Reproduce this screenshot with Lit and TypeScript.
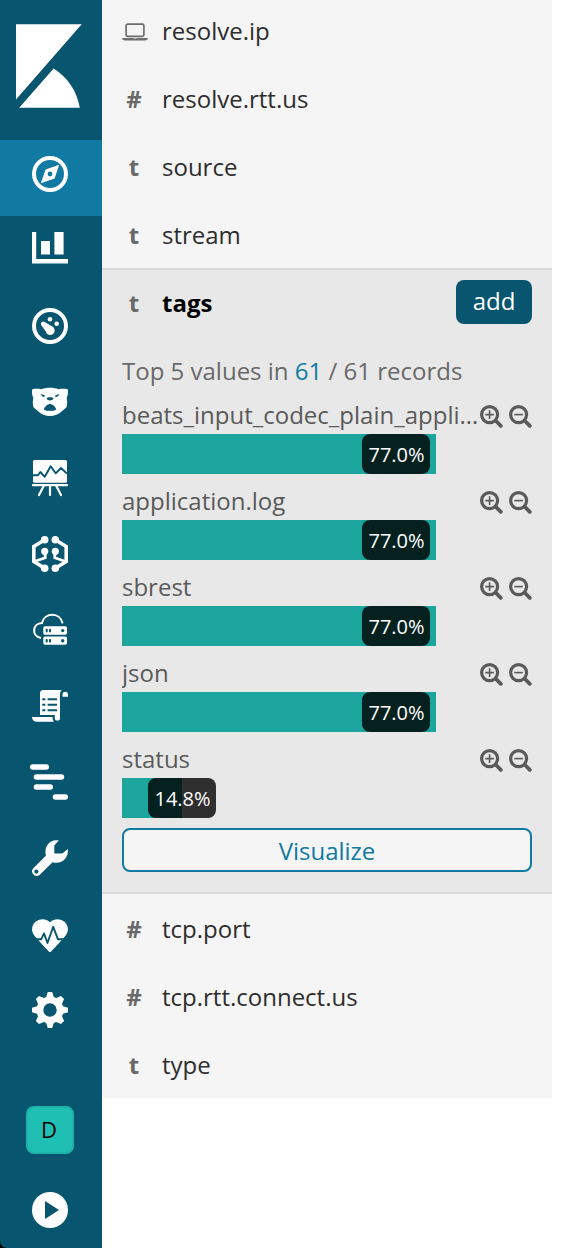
import { LitElement, html, svg, css } from "lit";
import { customElement, property } from "lit/decorators.js";

const icons: Record<string, unknown> = {
  discover: svg`
    <circle cx="18" cy="18" r="16" fill="none" stroke="#fff" stroke-width="4"/>
    <path fill-rule="evenodd" d="M27.2 8.8 22.6 22.4 8.8 27.2 13.6 13.4ZM18 15.6a2.4 2.4 0 1 0 0 4.8 2.4 2.4 0 0 0 0-4.8Z"/>`,
  visualize: svg`<path d="M0 0H4.2V27H36V31.5H0ZM9 9H18V22.6H9ZM22.4 0H31.6V22.6H22.4Z"/>`,
  dashboard: svg`
    <circle cx="18" cy="18" r="16" fill="none" stroke="#fff" stroke-width="4"/>
    <circle cx="18" cy="11.3" r="2.3"/><circle cx="24.7" cy="15.7" r="2.3"/>
    <path d="M12.7 14 20.8 18.8A4.5 4.5 0 1 1 13.8 23.5L9.3 17.3A2.4 2.4 0 0 1 12.7 14Z"/>`,
  timelion: svg`
    <path d="M.3 5.2C3 4.6 6.5 4.6 9.5 5.2 14 3.2 22 3.2 26.5 5.2 29.5 4.6 33 4.6 35.7 5.2 36.3 8 36 11.5 34.6 14 35.5 17 35.5 21 34.2 23.8 30.5 26 27 32 18 32 9 32 5.5 26 1.8 23.8.5 21 .5 17 1.4 14 0 11.5-.3 8 .3 5.2Z"/>
    <g class="cut"><path d="M8.8 10 13 11.6 12.4 12.9 9.8 12.3ZM27.2 10 23 11.6 23.6 12.9 26.2 12.3Z"/>
    <path d="M14.5 14.5C15 12.8 21 12.8 21.5 14.5 20.5 17 15.5 17 14.5 14.5Z"/>
    <path d="M18 20C21 20 24 23.5 24 25.5 24 27.3 12 27.3 12 25.5 12 23.5 15 20 18 20Z"/></g>`,
  canvas: svg`
    <rect x="1" y="0" width="34" height="22.7" rx="1.5"/>
    <rect x="0" y="24" width="36" height="2.2" rx=".6"/>
    <path d="M11.7 26 7 35M18 26V35M24.3 26 29 35" fill="none" stroke="#fff" stroke-width="2.2" stroke-linecap="round"/>
    <path class="pulse" d="M1 15.2H6L8.3 12 12.7 16.8 18.7 6.3 23.7 13.3 29 8 35 13.6"/>`,
  ml: svg`
    <g fill="none" stroke="#fff" stroke-width="3.6"><path d="M12.7 3.7 1.8 10.5V25.5L12.7 32.3M23.3 3.7 34.2 10.5V25.5L23.3 32.3"/>
    <path stroke-width="2.8" d="M13.2 16V21.8L3 25.3M22.8 16V21.8L33 25.3"/></g>
    <circle cx="12.7" cy="3.8" r="3.8"/><circle cx="23.3" cy="3.8" r="3.8"/>
    <circle cx="12.7" cy="32.2" r="3.8"/><circle cx="23.3" cy="32.2" r="3.8"/>
    <circle cx="12.7" cy="15.3" r="3.6"/><circle cx="23.3" cy="15.3" r="3.6"/>`,
  infra: svg`
    <path d="M9 26C-.8 24.2.2 11.2 10 11 12.5-.2 28.5 0 30.6 11.4" fill="none" stroke="#fff" stroke-width="2.1"/>
    <rect x="11.3" y="14.3" width="23.7" height="8.4" rx="1.7"/><rect x="11.3" y="24.6" width="23.7" height="8.2" rx="1.7"/>
    <g class="cut"><rect x="13.7" y="16.8" width="2" height="3.6" rx=".8"/><rect x="17" y="16.8" width="2" height="3.6" rx=".8"/><circle cx="30.7" cy="18.6" r="1.7"/>
    <rect x="13.7" y="26.9" width="2" height="3.6" rx=".8"/><rect x="17" y="26.9" width="2" height="3.6" rx=".8"/><circle cx="30.7" cy="28.7" r="1.7"/></g>`,
  logs: svg`
    <path d="M10.5 2H30C28.6 3 28 4.5 28 6.5V30A2.6 2.6 0 0 1 22.8 30V27H8V5Q8 2.4 10.5 2Z"/>
    <path d="M30.5 8.7V6A2.8 2.8 0 0 1 36 6V8.7Z"/>
    <path d="M0 29H20.5C20.5 31 21 32.8 22 33.7H4.5C1.5 33.7 0 31.5 0 29Z"/>
    <path class="cut" d="M10.3 10.3H13.4V12.3H10.3ZM15.6 10.3H25V12.3H15.6ZM10.3 15.8H13.4V17.8H10.3ZM15.6 15.8H25V17.8H15.6ZM10.3 21.3H13.4V23.3H10.3ZM15.6 21.3H25V23.3H15.6Z"/>`,
  apm: svg`
    <rect x="-2" y=".2" width="19" height="5.6" rx="2.8"/><rect x="1.7" y="10.2" width="30.5" height="5.6" rx="2.8"/>
    <rect x="1.7" y="20.2" width="19.3" height="5.6" rx="2.8"/><rect x="20.7" y="30.2" width="15.3" height="5.6" rx="2.8"/>`,
  tools: svg`
    <path fill-rule="evenodd" d="M26.7.4 22.3 5.5V13.4H30.3L35.8 9C37 18 29.5 24.7 20.6 22.2L7.5 35A4.6 4.6 0 0 1 1.1 28.5L14 15.6C11.5 7 17.5-1.2 26.7.4ZM4.4 29.5a2.1 2.1 0 1 0 0 4.2 2.1 2.1 0 0 0 0-4.2Z"/>`,
  heart: svg`
    <path d="M18 6.2C22 2 29 2.3 32.8 6 36.5 9.7 37 15.3 33.7 19.5 31 23 22.5 31.8 19.2 35.4Q18 36.6 16.8 35.4C13.5 31.8 5 23 2.3 19.5-1 15.3-.5 9.7 3.2 6 7 2.3 14 2 18 6.2Z"/>
    <path class="pulse" d="M0 23.3H9.2L12 17.4 15.5 27 21.2 10.8 26 23.3H36"/>`,
  gear: svg`
    <path fill-rule="evenodd" d="M15.8 0H20.2L21.8 5 24.2 6 29 3.9 32.1 7 30 11.8 31 14.2 36 15.8V20.2L31 21.8 30 24.2 32.1 29 29 32.1 24.2 30 21.8 31 20.2 36H15.8L14.2 31 11.8 30 7 32.1 3.9 29 6 24.2 5 21.8 0 20.2V15.8L5 14.2 6 11.8 3.9 7 7 3.9 11.8 6 14.2 5ZM18 11.3a6.7 6.7 0 1 0 0 13.4 6.7 6.7 0 0 0 0-13.4Z"/>`,
  play: svg`<circle cx="18" cy="18" r="18"/><path class="cut" d="M13 9 27 18 13 27Z"/>`,
};

const navItems = ["discover", "visualize", "dashboard", "timelion", "canvas", "ml", "infra", "logs", "apm", "tools", "heart", "gear"];

@customElement("side-nav")
class SideNav extends LitElement {
  static styles = css`
    :host { display: flex; flex-direction: column; width: 102px; height: 1248px; background: #07556e; border-bottom-left-radius: 7px; }
    .logo { height: 140px; display: block; }
    .item { box-sizing: border-box; height: 76px; padding: 16px 0 0 32px; }
    .item.active { background: #107aa3; }
    svg { display: block; overflow: visible; fill: #fff; }
    .cut { fill: #07556e; }
    .pulse { fill: none; stroke: #07556e; stroke-width: 1.9; stroke-linejoin: round; }
    .space { box-sizing: border-box; margin: 54px 0 38px 26px; width: 48px; height: 48px; border: 2px solid #1eb3a8; border-radius: 8px; background: #20bfb3; color: #000; font: 22px/43px "Open Sans", sans-serif; text-align: center; padding-right: 2px; }
    .play { padding-left: 32px; }
  `;
  render() {
    return html`
      <svg class="logo" width="102" height="140"><path d="M16 24.2H81.7L16 99.4ZM53.6 68.6 19.2 107.8H79.8C77.2 91.5 67.5 77 53.6 68.6Z"/></svg>
      ${navItems.map((n, i) => html`<div class="item ${i === 0 ? "active" : ""}"><svg width="36" height="36">${icons[n]}</svg></div>`)}
      <div class="space">D</div>
      <div class="play"><svg width="36" height="36">${icons.play}</svg></div>
    `;
  }
}

@customElement("field-row")
class FieldRow extends LitElement {
  @property() kind = "t";
  @property() name = "";
  static styles = css`
    :host { box-sizing: border-box; display: flex; align-items: center; height: 64px; padding: 0 0 2px 20px; font: 24px/36px "Open Sans", sans-serif; color: #2d2d2d; }
    .kind { width: 24px; margin-right: 16px; display: flex; justify-content: center; font-weight: 700; color: #696969; }
    .kind svg { display: block; flex: none; margin: 2px 0 0 2px; }
    :host([selected]) { color: #000; font-weight: 700; }
  `;
  render() {
    return html`
      <span class="kind">${this.kind === "ip"
        ? html`<svg width="26" height="18"><rect x="4.1" y="1.1" width="17.8" height="12.2" rx="1.6" fill="none" stroke="#6e6e6e" stroke-width="1.7"/><path d="M0 14.9H11L12 15.6H14L15 14.9H26Q25.5 17.6 23 17.6H3Q.5 17.6 0 14.9Z" fill="#6e6e6e"/></svg>`
        : this.kind}</span>
      <span>${this.name}</span>
    `;
  }
}

const buckets = [
  { label: "beats_input_codec_plain_applied", pct: "77.0%", bar: 314, badge: 240 },
  { label: "application.log", pct: "77.0%", bar: 314, badge: 240 },
  { label: "sbrest", pct: "77.0%", bar: 314, badge: 240 },
  { label: "json", pct: "77.0%", bar: 314, badge: 240 },
  { label: "status", pct: "14.8%", bar: 60, badge: 26 },
];

const magnifier = (plus: boolean) => html`<svg width="23" height="23" fill="none" stroke="#5a5a5a">
  <circle cx="9.6" cy="9.6" r="8" stroke-width="3.2"/>
  <path d="M16 16 20.8 20.8" stroke-width="3.8" stroke-linecap="round"/>
  <path d="${plus ? "M5.3 9.6H13.9M9.6 5.3V13.9" : "M5.3 9.6H13.9"}" stroke-width="1.6"/></svg>`;

@customElement("app-root")
class AppRoot extends LitElement {
  static styles = css`
    :host { display: flex; align-items: flex-start; height: 1248px; overflow: hidden; background: linear-gradient(90deg, #000 0 50px, #fff 50px); font: 24px/36px "Open Sans", sans-serif; }
    .fields { width: 450px; background: #f5f5f5; }
    .list { display: flex; flex-direction: column; gap: 4px; }
    .list.after { padding-top: 4px; }
    .open { box-sizing: border-box; height: 626px; border: solid #d9d9d9; border-width: 2px 0; background: #e8e8e8; }
    .head { display: flex; align-items: flex-start; justify-content: space-between; height: 68px; padding-right: 20px; }
    .head field-row { height: 68px; }
    .add { width: 76px; height: 44px; margin-top: 10px; border-radius: 8px; background: #07556e; color: #fff; line-height: 41px; text-align: center; }
    .details { padding: 15px 20px 0; color: #696969; }
    .count { color: #107aa3; }
    .bucket { padding-top: 8px; height: 78px; }
    .bucket:first-of-type { padding-top: 7px; }
    .line { display: flex; height: 38px; color: #5a5a5a; }
    .label { flex: 1; min-width: 0; height: 36px; padding-top: 1px; overflow: hidden; text-overflow: ellipsis; white-space: nowrap; }
    .zooms { display: flex; gap: 6px; padding-top: 9px; }
    .zooms svg { display: block; }
    .track { position: relative; height: 40px; }
    .bar { height: 40px; background: #1ba59c; }
    .badge { position: absolute; top: 0; width: 68px; height: 40px; border-radius: 8px; background: rgba(0, 0, 0, 0.8); color: #fff; font-size: 20px; line-height: 41px; text-align: center; text-indent: 1px; }
    .visualize { box-sizing: border-box; height: 44px; margin-top: 10px; border: 2px solid #107aa3; border-radius: 8px; background: #f5f5f5; color: #107aa3; line-height: 42px; text-align: center; }
  `;
  render() {
    return html`
      <side-nav></side-nav>
      <div class="fields">
        <div class="list">
          <field-row kind="ip" name="resolve.ip"></field-row>
          <field-row kind="#" name="resolve.rtt.us"></field-row>
          <field-row kind="t" name="source"></field-row>
          <field-row kind="t" name="stream"></field-row>
        </div>
        <div class="open">
          <div class="head"><field-row selected kind="t" name="tags"></field-row><div class="add">add</div></div>
          <section class="details">
            <header>Top 5 values in <span class="count">61</span> / 61 records</header>
            ${buckets.map((b) => html`
              <div class="bucket">
                <div class="line"><span class="label">${b.label}</span><span class="zooms">${magnifier(true)}${magnifier(false)}</span></div>
                <div class="track"><div class="bar" style="width:${b.bar}px"></div><div class="badge" style="left:${b.badge}px">${b.pct}</div></div>
              </div>`)}
            <footer class="visualize">Visualize</footer>
          </section>
        </div>
        <div class="list after">
          <field-row kind="#" name="tcp.port"></field-row>
          <field-row kind="#" name="tcp.rtt.connect.us"></field-row>
          <field-row kind="t" name="type"></field-row>
        </div>
      </div>
    `;
  }
}
